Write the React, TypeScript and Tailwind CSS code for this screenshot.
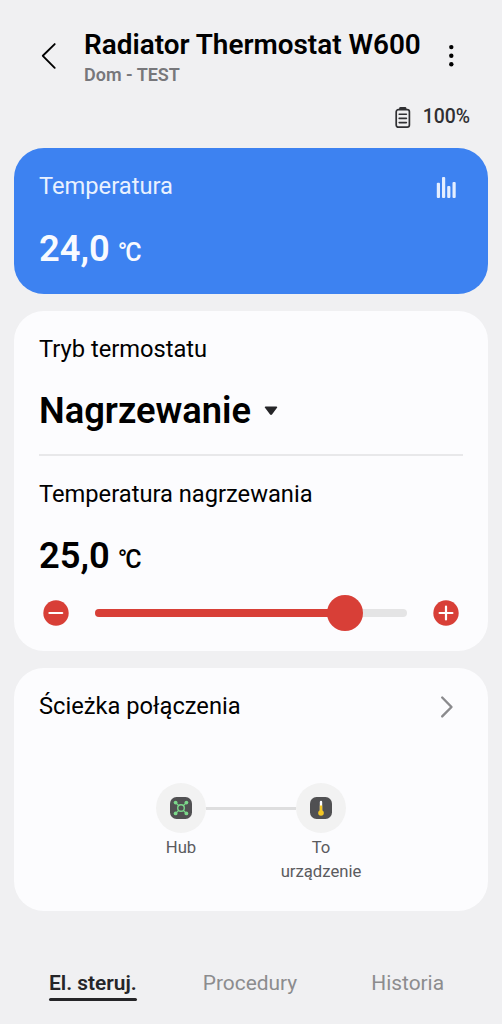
import { useState } from "react";

interface CardProps {
    className: string;
    children: React.ReactNode;
}

const Card: React.FC<CardProps> = ({ className, children }) => (
    <section className={`rounded-[30px] ${className}`}>{children}</section>
);

interface ReadingProps {
    value: number;
}

const Reading: React.FC<ReadingProps> = ({ value }) => (
    <div className="flex items-baseline h-11 leading-[44px]">
        <span className="text-[36.3px] font-semibold">{value.toFixed(1).replace(".", ",")}</span>
        <span className="ml-[8px] text-[25px] font-medium tracking-[-2px]">°C</span>
    </div>
);

const MIN_TEMP = 5;
const MAX_TEMP = 30;

const tabs = [
    { label: "El. steruj.", className: "ml-[49px]" },
    { label: "Procedury", className: "ml-[66px]" },
    { label: "Historia", className: "ml-[74px]" },
];

const Header = () => (
    <header className="flex items-start h-[76px] shrink-0">
        <button className="ml-[40px] mt-[14px] w-[18px]">
            <svg width="18" height="28" viewBox="0 0 18 28" fill="none" stroke="#000" strokeWidth="1.9" strokeLinecap="round" strokeLinejoin="round">
                <path d="M14.7 2.1 2.8 13.8l11.9 12" />
            </svg>
        </button>
        <div className="ml-[26px] mt-px w-[340px] whitespace-nowrap">
            <h1 className="text-[27.9px] leading-8 font-semibold text-black">Radiator Thermostat W600</h1>
            <p className="mt-[2px] text-[18px] leading-6 font-semibold text-[#77777b]">Dom - TEST</p>
        </div>
        <button className="ml-[21px] mt-[14px] w-3">
            <svg width="12" height="28" viewBox="0 0 12 28" fill="#000">
                <circle cx="6.3" cy="5.1" r="2.2" />
                <circle cx="6.3" cy="13.7" r="2.2" />
                <circle cx="6.3" cy="22.3" r="2.2" />
            </svg>
        </button>
    </header>
);

const Battery = () => (
    <div className="mt-px flex items-center justify-end h-6 pr-8 text-[#303033]">
        <svg className="mt-px" width="16" height="22" viewBox="0 0 16 22" fill="none" stroke="currentColor">
            <rect x="1.2" y="2.6" width="13.2" height="17.6" rx="2.2" strokeWidth="1.7" />
            <path d="M5.5 1.3h4.6" strokeWidth="2.6" strokeLinecap="round" />
            <path d="M4.2 7.2h7.2M4.2 11.4h7.2M4.2 15.6h7.2" strokeWidth="1.6" strokeLinecap="round" />
        </svg>
        <span className="ml-[12px] text-[19.4px] leading-6 font-medium">100%</span>
    </div>
);

const App = () => {
    const [target, setTarget] = useState(25);
    const [active, setActive] = useState("El. steruj.");
    const percent = ((target - MIN_TEMP) / (MAX_TEMP - MIN_TEMP)) * 100;

    return (
        <main className="flex flex-col w-[502px] h-[1024px] pt-7 overflow-hidden bg-[#f0f0f2] font-['Roboto','Liberation_Sans',sans-serif] text-black">
            <Header />
            <Battery />

            <div className="flex flex-col gap-[17px] px-[14px] pt-[19px]">
                <Card className="h-[146px] bg-[#3d82f1] px-[25px] pt-[22px] text-[#f8faff]">
                    <div className="flex items-start justify-between">
                        <h2 className="text-[23.7px] leading-8 text-[#e9f1ff]">Temperatura</h2>
                        <svg className="mr-[6px] mt-[7px]" width="21" height="22" viewBox="0 0 21 22" fill="#e4eeff">
                            <rect x="0.8" y="5.8" width="3.2" height="15.2" rx="1" />
                            <rect x="6" y="0" width="3.2" height="21" rx="1" />
                            <rect x="11.2" y="9" width="3.2" height="12" rx="1" />
                            <rect x="16.5" y="5" width="3.2" height="16" rx="1" />
                        </svg>
                    </div>
                    <div className="mt-[25px]">
                        <Reading value={24} />
                    </div>
                </Card>

                <Card className="h-[340px] bg-[#fcfcfe] px-[25px] pt-[22px]">
                    <h2 className="text-[23.7px] leading-8">Tryb termostatu</h2>
                    <button className="mt-[24px] flex items-center h-11 text-[36.3px] leading-[44px] font-semibold">
                        Nagrzewanie
                        <svg className="ml-[13px]" width="14" height="10" viewBox="0 0 14 10" fill="#252528">
                            <path d="M1.6.5h10.8c.8 0 1.1.8.6 1.3L8 8.6c-.5.6-1.4.6-1.9 0L1 1.8C.5 1.3.8.5 1.6.5Z" />
                        </svg>
                    </button>
                    <div className="mt-[21px] h-[2px] bg-[#e8e8ea]" />
                    <h2 className="mt-[22px] text-[23.7px] leading-8">Temperatura nagrzewania</h2>
                    <div className="mt-[24px]">
                        <Reading value={target} />
                    </div>
                    <div className="mt-[17px] flex items-center h-9 pl-1 pr-[4px]">
                        <button onClick={() => setTarget(Math.max(MIN_TEMP, target - 0.5))}>
                            <svg width="26" height="26" viewBox="0 0 26 26">
                                <circle cx="13" cy="13" r="12.7" fill="#d83f37" />
                                <path d="M6.4 13h12.8" stroke="#fff" strokeWidth="2.2" strokeLinecap="round" />
                            </svg>
                        </button>
                        <div className="relative ml-[26px] w-[312px] h-2 rounded-full bg-[#e4e4e5]">
                            <div className="h-2 rounded-full bg-[#d83f37]" style={{ width: `${percent}%` }} />
                            <div
                                className="absolute top-1/2 size-9 -translate-x-1/2 -translate-y-1/2 rounded-full bg-[#d83f37]"
                                style={{ left: `${percent}%` }}
                            />
                        </div>
                        <button className="ml-auto" onClick={() => setTarget(Math.min(MAX_TEMP, target + 0.5))}>
                            <svg width="26" height="26" viewBox="0 0 26 26">
                                <circle cx="13" cy="13" r="12.7" fill="#d83f37" />
                                <path d="M6.6 13h12.8M13 6.6v12.8" stroke="#fff" strokeWidth="2.2" strokeLinecap="round" />
                            </svg>
                        </button>
                    </div>
                </Card>

                <Card className="h-[243px] bg-[#fcfcfe] px-[25px] pt-[22px]">
                    <div className="flex items-start justify-between">
                        <h2 className="text-[23.7px] leading-8">Ścieżka połączenia</h2>
                        <svg className="mr-[9px] mt-[5px]" width="14" height="24" viewBox="0 0 14 24" fill="none" stroke="#8a8a8d" strokeWidth="2.4" strokeLinecap="round" strokeLinejoin="round">
                            <path d="M2.2 2.5 11.5 12l-9.3 9.4" />
                        </svg>
                    </div>
                    <div className="mt-[61px] flex justify-center text-center text-[16.7px] leading-6 text-[#5b5b5e]">
                        <div className="flex flex-col items-center w-[50px]">
                            <div className="flex items-center justify-center size-[50px] rounded-full bg-[#f2f2f2]">
                                <svg width="24" height="24" viewBox="0 0 24 24">
                                    <rect x="1" y="1" width="22" height="22" rx="6.5" fill="#505052" />
                                    <g fill="none" stroke="#7bd88a" strokeWidth="1.2">
                                        <circle cx="12" cy="12" r="3.3" strokeWidth="1.4" />
                                        <path d="M7 7l2.7 2.7M17 7l-2.7 2.7M7 17l2.7-2.7M17 17l-2.7-2.7" />
                                    </g>
                                    <g fill="#7bd88a">
                                        <circle cx="6.6" cy="6.6" r="1.9" />
                                        <circle cx="17.4" cy="6.6" r="1.9" />
                                        <circle cx="6.6" cy="17.4" r="1.9" />
                                        <circle cx="17.4" cy="17.4" r="1.9" />
                                    </g>
                                </svg>
                            </div>
                            <span className="mt-[3px]">Hub</span>
                        </div>
                        <div className="mt-[24px] w-[90px] h-[3px] bg-[#dededf]" />
                        <div className="flex flex-col items-center w-[50px]">
                            <div className="flex items-center justify-center size-[50px] rounded-full bg-[#f2f2f2]">
                                <svg width="24" height="24" viewBox="0 0 24 24">
                                    <rect x="1" y="1" width="22" height="22" rx="6.5" fill="#505052" />
                                    <path d="M12 6v10" stroke="#fff" strokeWidth="2.4" strokeLinecap="round" />
                                    <path d="M12 9.5v7" stroke="#f4c724" strokeWidth="2.4" />
                                    <circle cx="12" cy="17" r="2.8" fill="#f4c724" />
                                </svg>
                            </div>
                            <span className="mt-[3px]">To<br />urządzenie</span>
                        </div>
                    </div>
                </Card>
            </div>

            <nav className="mt-[59px] flex text-[20.9px] leading-[26px] whitespace-nowrap">
                {tabs.map((tab) => (
                    <button key={tab.label} onClick={() => setActive(tab.label)} className={`flex flex-col ${tab.className}`}>
                        <span className={active === tab.label ? "font-semibold text-[#252528]" : "text-[#8c8c8e]"}>{tab.label}</span>
                        {active === tab.label && <span className="mt-[2px] h-[3px] w-full rounded-full bg-[#252528]" />}
                    </button>
                ))}
            </nav>
        </main>
    );
};

export default App;
